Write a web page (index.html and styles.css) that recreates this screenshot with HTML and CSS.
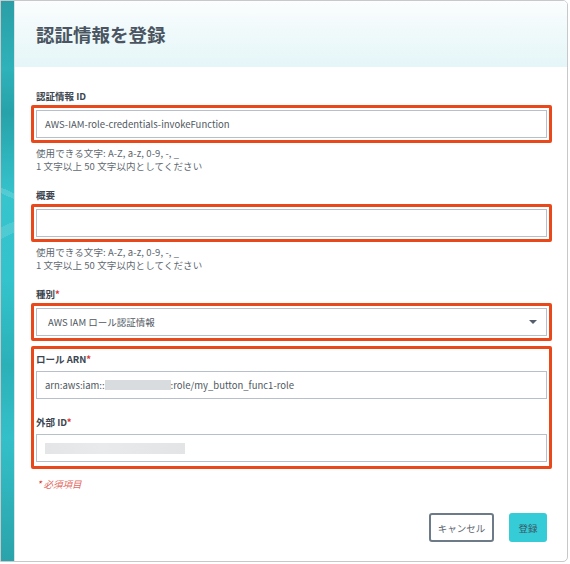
FILE: index.html
```html
<!DOCTYPE html>
<html lang="ja">
<head>
<meta charset="utf-8">
<title>認証情報を登録</title>
<link rel="stylesheet" href="styles.css">
</head>
<body>
<div class="frame">
  <div class="stripe"></div>
  <div class="panel">
    <div class="header"><h1 class="title">認証情報を登録</h1></div>
    <div class="form">
      <div class="field">
        <div class="label">認証情報 ID</div>
        <div class="hl"><div class="input">AWS-IAM-role-credentials-invokeFunction</div></div>
        <div class="help"><div>使用できる文字: A-Z, a-z, 0-9, -, _</div><div>1 文字以上 50 文字以内としてください</div></div>
      </div>
      <div class="field">
        <div class="label">概要</div>
        <div class="hl"><div class="input"></div></div>
        <div class="help"><div>使用できる文字: A-Z, a-z, 0-9, -, _</div><div>1 文字以上 50 文字以内としてください</div></div>
      </div>
      <div class="field">
        <div class="label">種別<span class="req">*</span></div>
        <div class="hl"><div class="input select"><span>AWS IAM ロール認証情報</span><span class="caret"></span></div></div>
      </div>
      <div class="hl group">
        <div class="label">ロール ARN<span class="req">*</span></div>
        <div class="input">arn:aws:iam::<span class="mask arn-mask"></span>:role/my_button_func1-role</div>
        <div class="label second">外部 ID<span class="req">*</span></div>
        <div class="input"><span class="mask ext-mask"></span></div>
      </div>
      <div class="required-note"><span class="star">*</span> 必須項目</div>
    </div>
    <div class="footer">
      <button class="btn btn-cancel">キャンセル</button>
      <button class="btn btn-primary">登録</button>
    </div>
  </div>
</div>
</body>
</html>
```

FILE: styles.css
```css
* { box-sizing: border-box; }
html, body { margin: 0; padding: 0; background: #ffffff; }
body {
  font-family: "Noto Sans CJK JP", "Noto Sans", sans-serif;
  width: 570px;
  height: 564px;
  overflow: hidden;
}
.frame {
  width: 568px;
  height: 562px;
  border: 1px solid #c6c8ca;
  border-radius: 0 5px 5px 0;
  display: flex;
  overflow: hidden;
  background: #ffffff;
}
.stripe {
  width: 14px;
  flex: none;
  background:
    linear-gradient(155deg, transparent 0 40%, rgba(255,255,255,0.12) 40% 42%, transparent 42%),
    linear-gradient(25deg, transparent 0 65%, rgba(255,255,255,0.15) 65% 66%, transparent 66%),
    linear-gradient(180deg, #2a9ea6 0%, #2fb2ba 12%, #27a2aa 20%, #36c4cd 35%, #33c3cc 50%, #2bb0b8 65%, #34c0c9 78%, #2aa3ab 100%);
  border-right: 1px solid #d9e4e6;
}
.panel {
  flex: 1;
  display: flex;
  flex-direction: column;
  min-width: 0;
}
.header {
  height: 66px;
  flex: none;
  background: linear-gradient(180deg, #fbfdfe 0%, #eef9fa 55%, #e5f6f8 100%);
  padding-left: 21px;
  display: flex;
  align-items: center;
}
.title {
  margin: 0;
  font-size: 18.5px;
  font-weight: 700;
  color: #4a5561;
  line-height: 1;
  padding-top: 1px;
}
.form {
  padding: 22px 20px 0 21px;
}
.field { margin-bottom: 15px; }
.field:nth-child(3) { margin-bottom: 5px; }
.label {
  font-size: 9.5px;
  font-weight: 700;
  line-height: 14px;
  color: #3c4651;
  margin-bottom: 2px;
}
.req { color: #e0342c; font-weight: 700; }
.hl {
  border: 3px solid #e8481a;
  border-radius: 2px;
  padding: 2px;
  margin: 0 -5px;
}
.input {
  height: 28px;
  border: 1px solid #b7c0ca;
  background: #fff;
  padding: 0 8px;
  font-size: 9.5px;
  color: #50575e;
  display: flex;
  align-items: center;
  white-space: nowrap;
}
.select {
  justify-content: space-between;
  padding: 0 9px 0 11px;
}
.caret {
  width: 0;
  height: 0;
  border-left: 4px solid transparent;
  border-right: 4px solid transparent;
  border-top: 4px solid #555f6b;
}
.help {
  margin-top: 4px;
  font-size: 9.5px;
  line-height: 13px;
  color: #60686f;
  letter-spacing: 0.1px;
}
.help div { height: 13px; }
.group {
  padding: 3px 2px 4px 2px;
}
.group .label { margin-bottom: 5px; }
.group .label.second { margin-top: 16px; }
.mask {
  display: inline-block;
  background: #d9dcdf;
  height: 10px;
}
.arn-mask { width: 66px; }
.ext-mask {
  width: 140px;
  height: 11px;
  background: linear-gradient(90deg, #e3e5e7, #e8eaec 40%, #e2e4e6);
}
.required-note {
  margin-top: 9px;
  font-size: 9.5px;
  font-style: italic;
  line-height: 13px;
  color: #e26a62;
  padding-left: 1px;
}
.required-note .star { color: #e0342c; }
.footer {
  margin-top: auto;
  padding: 0 20px 19px 0;
  display: flex;
  justify-content: flex-end;
  gap: 15px;
}
.btn {
  height: 29px;
  padding: 0;
  border-radius: 3px;
  font-family: "Noto Sans CJK JP", "Noto Sans", sans-serif;
  font-size: 9.5px;
  white-space: nowrap;
  cursor: pointer;
}
.btn-cancel {
  width: 65px;
  background: #fff;
  border: 2px solid #6d7a87;
  color: #5a6570;
}
.btn-primary {
  width: 38px;
  background: #35ccd7;
  border: none;
  color: #3b5866;
}
```
